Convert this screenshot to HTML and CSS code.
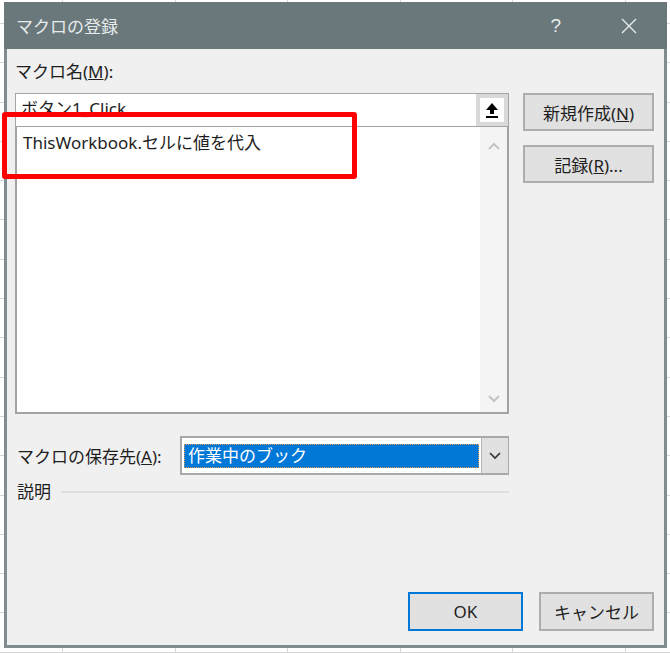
FILE: index.html
```html
<!DOCTYPE html>
<html lang="ja">
<head>
  <meta charset="UTF-8" />
  <title>マクロの登録</title>
  <link rel="stylesheet" href="styles.css">
</head>
<body>

  <div class="window">
    <div class="titlebar">
      <span class="title">マクロの登録</span>
      <span class="help">?</span>
      <svg class="close" width="16" height="16" viewBox="0 0 16 16">
        <path d="M1 1 L15 15 M15 1 L1 15" stroke="#e6ebec" stroke-width="1.4" fill="none"/>
      </svg>
    </div>

    <div class="content">
      <div class="main">
        <div class="left">
          <div class="label">マクロ名(<u>M</u>):</div>
          <div class="namebox">
            <span class="nametext">ボタン1_Click</span>
            <span class="pick">
              <span class="pick-inner">
                <svg width="14" height="16" viewBox="0 0 14 16">
                  <path d="M7 1 L13 8 L9 8 L9 12 L5 12 L5 8 L1 8 Z" fill="#000"/>
                  <rect x="1" y="14" width="12" height="2" fill="#000"/>
                </svg>
              </span>
            </span>
          </div>
          <div class="listbox">
            <div class="items">
              <div class="item">ThisWorkbook.セルに値を代入</div>
            </div>
            <div class="scroll">
              <svg width="12" height="8" viewBox="0 0 12 8"><path d="M1 7 L6 2 L11 7" stroke="#c4c4c4" stroke-width="2" fill="none"/></svg>
              <svg width="12" height="8" viewBox="0 0 12 8"><path d="M1 1 L6 6 L11 1" stroke="#c4c4c4" stroke-width="2" fill="none"/></svg>
            </div>
          </div>

          <div class="store-row">
            <span class="store-label">マクロの保存先(<u>A</u>):</span>
            <div class="combo">
              <div class="combo-field"><span class="selected">作業中のブック</span></div>
              <span class="combo-btn">
                <svg width="12" height="8" viewBox="0 0 12 8"><path d="M1 1 L6 6 L11 1" stroke="#333" stroke-width="1.6" fill="none"/></svg>
              </span>
            </div>
          </div>

          <div class="desc-row">
            <span>説明</span>
            <span class="rule"></span>
          </div>
        </div>

        <div class="side">
          <button class="btn">新規作成(<u>N</u>)</button>
          <button class="btn">記録(<u>R</u>)...</button>
        </div>
      </div>

      <div class="footer">
        <button class="btn ok">OK</button>
        <button class="btn">キャンセル</button>
      </div>
    </div>

    <div class="mark"></div>
  </div>

</body>
</html>
```

FILE: styles.css
```css
body {
  margin: 0;
  width: 670px;
  height: 653px;
  overflow: hidden;
  font-family: "Noto Sans", "Noto Sans CJK JP", sans-serif;
  color: #1e1e1e;
  background-color: #fff;
  background-image:
    repeating-linear-gradient(to right, transparent 0, transparent 62px, #d6d6d6 62px, #d6d6d6 63px, transparent 63px, transparent 112.6px),
    repeating-linear-gradient(to bottom, transparent 0, transparent 23px, #d6d6d6 23px, #d6d6d6 24px, transparent 24px, transparent 39.3px);
}
.window {
  position: relative;
  margin: 2px 0 0 4px;
  width: 663px;
  height: 646px;
  display: flex;
  flex-direction: column;
}
.titlebar {
  height: 47px;
  background: #6a787b;
  display: flex;
  align-items: center;
  color: #e6ebec;
  padding-left: 12px;
  flex-shrink: 0;
}
.title {
  font-size: 17px;
  flex: 1;
}
.help {
  font-size: 19px;
  margin-right: 60px;
  font-family: "Liberation Sans", sans-serif;
}
.close {
  margin-right: 30px;
}
.content {
  flex: 1;
  background: #f0f0f0;
  border: 3px solid #808c8f;
  border-top: none;
  padding: 13px 10px 14px 8px;
  display: flex;
  flex-direction: column;
  font-size: 17px;
}
.main {
  display: flex;
}
.left {
  width: 494px;
}
.label {
  height: 20px;
  line-height: 20px;
  margin-bottom: 11px;
}
.namebox {
  height: 34px;
  box-sizing: border-box;
  background: #fff;
  border: 1px solid #a6a6a6;
  display: flex;
}
.nametext {
  flex: 1;
  padding: 3px 0 0 5px;
  line-height: 24px;
}
.pick {
  width: 32px;
  background: #d9d9d9;
  padding: 4px 4px;
  box-sizing: border-box;
  display: flex;
}
.pick-inner {
  flex: 1;
  background: #fff;
  display: flex;
  align-items: center;
  justify-content: center;
}
.listbox {
  margin-top: -1px;
  height: 288px;
  box-sizing: border-box;
  background: #fff;
  border: 2px solid #a3a3a3;
  border-top-width: 1px;
  display: flex;
}
.items {
  flex: 1;
  padding: 6px 6px;
}
.item {
  line-height: 20px;
}
.scroll {
  width: 27px;
  background: #f4f4f4;
  display: flex;
  flex-direction: column;
  justify-content: space-between;
  align-items: center;
  padding: 15px 0 9px;
}
.store-row {
  margin-top: 22px;
  display: flex;
  align-items: center;
}
.store-label {
  width: 163px;
  padding-left: 2px;
}
.combo {
  flex: 1;
  height: 39px;
  box-sizing: border-box;
  background: #fff;
  border: 2px solid #a9a9a9;
  border-right-width: 1px;
  display: flex;
}
.combo-field {
  flex: 1;
  padding: 6px 2px 5px 2px;
  display: flex;
}
.selected {
  flex: 1;
  background: #0078d7;
  color: #fff;
  border: 1px dotted #d99a4e;
  padding-left: 3px;
  line-height: 21px;
}
.combo-btn {
  width: 26px;
  background: #e1e1e1;
  border-left: 1px solid #b4b4b4;
  display: flex;
  align-items: center;
  justify-content: center;
}
.desc-row {
  margin-top: 7px;
  display: flex;
  align-items: center;
  line-height: 20px;
  padding-left: 2px;
}
.rule {
  flex: 1;
  height: 2px;
  background: #e0e0e0;
  margin-left: 10px;
}
.side {
  margin-left: 14px;
  margin-top: 31px;
  width: 131px;
  display: flex;
  flex-direction: column;
  gap: 14px;
}
.btn {
  font-family: inherit;
  font-size: 17px;
  color: #1e1e1e;
  background: #e1e1e1;
  border: 2px solid #adadad;
  height: 38px;
  padding: 0;
  width: 100%;
}
.footer {
  margin-top: auto;
  display: flex;
  justify-content: flex-end;
  gap: 16px;
}
.footer .btn {
  width: 115px;
  height: 39px;
}
.ok {
  border: 2px solid #0078d7;
}
.mark {
  position: absolute;
  left: -2px;
  top: 110px;
  width: 345px;
  height: 57px;
  border: 5px solid #f00;
  border-radius: 3px;
}
```
